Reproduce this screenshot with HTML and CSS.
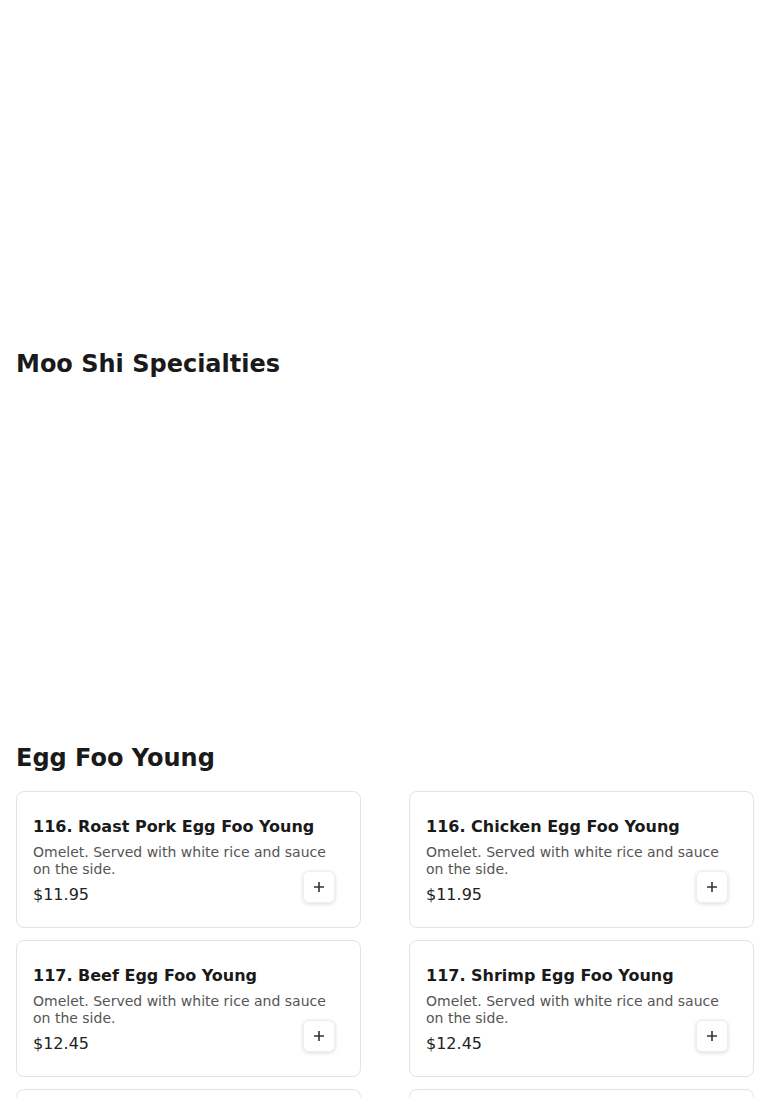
FILE: index.html
```html
<!DOCTYPE html>
<html lang="en">
<head>
<meta charset="utf-8">
<title>Menu</title>
<link rel="stylesheet" href="styles.css">
</head>
<body>
<main class="menu">
  <div class="hero-space"></div>
  <section class="section section--empty">
    <h2 class="section-title">Moo Shi Specialties</h2>
    <div class="items items--empty"></div>
  </section>
  <section class="section">
    <h2 class="section-title">Egg Foo Young</h2>
    <div class="items">
      <article class="card">
        <h3 class="card-title">116. Roast Pork Egg Foo Young</h3>
        <p class="card-desc">Omelet. Served with white rice and sauce on the side.</p>
        <div class="card-price">$11.95</div>
        <button class="add-btn" aria-label="Add"><svg width="12" height="12" viewBox="0 0 12 12"><path d="M6 1v10M1 6h10" stroke="#333" stroke-width="1.6"/></svg></button>
      </article>
      <article class="card">
        <h3 class="card-title">116. Chicken Egg Foo Young</h3>
        <p class="card-desc">Omelet. Served with white rice and sauce on the side.</p>
        <div class="card-price">$11.95</div>
        <button class="add-btn" aria-label="Add"><svg width="12" height="12" viewBox="0 0 12 12"><path d="M6 1v10M1 6h10" stroke="#333" stroke-width="1.6"/></svg></button>
      </article>
      <article class="card">
        <h3 class="card-title">117. Beef Egg Foo Young</h3>
        <p class="card-desc">Omelet. Served with white rice and sauce on the side.</p>
        <div class="card-price">$12.45</div>
        <button class="add-btn" aria-label="Add"><svg width="12" height="12" viewBox="0 0 12 12"><path d="M6 1v10M1 6h10" stroke="#333" stroke-width="1.6"/></svg></button>
      </article>
      <article class="card">
        <h3 class="card-title">117. Shrimp Egg Foo Young</h3>
        <p class="card-desc">Omelet. Served with white rice and sauce on the side.</p>
        <div class="card-price">$12.45</div>
        <button class="add-btn" aria-label="Add"><svg width="12" height="12" viewBox="0 0 12 12"><path d="M6 1v10M1 6h10" stroke="#333" stroke-width="1.6"/></svg></button>
      </article>
      <article class="card">
        <h3 class="card-title">118. Vegetable Egg Foo Young</h3>
        <p class="card-desc">Omelet. Served with white rice and sauce on the side.</p>
        <div class="card-price">$11.45</div>
        <button class="add-btn" aria-label="Add"><svg width="12" height="12" viewBox="0 0 12 12"><path d="M6 1v10M1 6h10" stroke="#333" stroke-width="1.6"/></svg></button>
      </article>
      <article class="card">
        <h3 class="card-title">119. House Special Egg Foo Young</h3>
        <p class="card-desc">Omelet. Served with white rice and sauce on the side.</p>
        <div class="card-price">$12.95</div>
        <button class="add-btn" aria-label="Add"><svg width="12" height="12" viewBox="0 0 12 12"><path d="M6 1v10M1 6h10" stroke="#333" stroke-width="1.6"/></svg></button>
      </article>
    </div>
  </section>
</main>
</body>
</html>
```
FILE: styles.css
```css
* { box-sizing: border-box; }
html, body { margin: 0; padding: 0; background: #fff; }
body {
  font-family: "DejaVu Sans", "Liberation Sans", sans-serif;
  color: #1a1a1a;
}
.menu { padding: 0 16px; }
.hero-space { height: 348px; }
.section-title {
  margin: 0 0 17px;
  font-size: 24px;
  line-height: 32px;
  font-weight: 700;
  color: #1a1a1a;
}
.items {
  display: grid;
  grid-template-columns: 1fr 1fr;
  column-gap: 48px;
  row-gap: 12px;
}
.items--empty { min-height: 345px; }
.card {
  position: relative;
  border: 1px solid #e3e3e3;
  border-radius: 8px;
  padding: 23px 16px 20px;
  background: #fff;
}
.card-title {
  margin: 0;
  font-size: 16px;
  line-height: 24px;
  font-weight: 700;
  color: #1a1a1a;
}
.card-desc {
  margin: 5px 0 5px;
  font-size: 14px;
  line-height: 17px;
  color: #555;
}
.card-price {
  font-size: 16px;
  line-height: 24px;
  color: #222;
}
.add-btn {
  position: absolute;
  right: 25px;
  bottom: 24px;
  width: 32px;
  height: 32px;
  padding: 0;
  border: 1px solid #eeeeee;
  border-radius: 6px;
  background: #fff;
  box-shadow: 0 1px 4px rgba(0, 0, 0, 0.14);
  display: flex;
  align-items: center;
  justify-content: center;
  cursor: pointer;
}
.add-btn svg { display: block; }
```
